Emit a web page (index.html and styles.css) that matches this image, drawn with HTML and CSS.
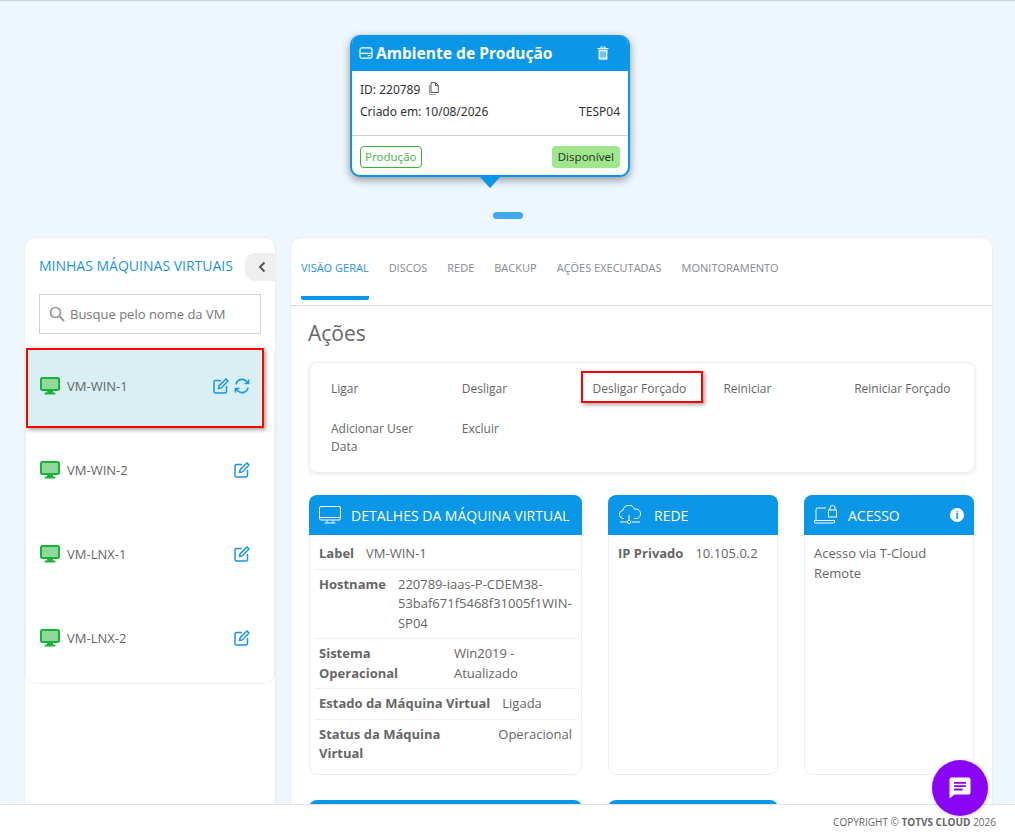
FILE: index.html
```html
<!DOCTYPE html>
<html lang="pt-BR">
<head>
<meta charset="utf-8">
<title>Máquinas Virtuais</title>
<link rel="stylesheet" href="styles.css">
</head>
<body>
<div class="page">
  <section class="top">
    <div class="env">
      <div class="env-card">
        <div class="env-head">
          <svg class="env-icon" viewBox="0 0 16 14" width="14" height="12"><rect x="1" y="1" width="14" height="12" rx="2" fill="none" stroke="#fff" stroke-width="1.4"/><path d="M1 7.500h14" stroke="#fff" stroke-width="1.4"/><path d="M10 10h3" stroke="#fff" stroke-width="1.4"/></svg>
          <span class="env-title">Ambiente de Produção</span>
          <svg class="env-trash" viewBox="0 0 12 14" width="12" height="14"><path d="M.5 2.5h11M4 2.500V1h4v1.500" stroke="#dff0fc" stroke-width="1.200" fill="none"/><path d="M1.500 3.500h9V13a.8.8 0 0 1-.8.8H2.300a.8.8 0 0 1-.8-.8z" fill="#dff0fc"/><path d="M4 5.500v6M6 5.500v6M8 5.500v6" stroke="#0b97e8" stroke-width="1"/></svg>
        </div>
        <div class="env-body">
          <div class="env-row"><span>ID: 220789</span>
            <svg class="copy" viewBox="0 0 12 14" width="12" height="14"><path d="M4 .7h4.500L11.300 3.500V10.500H4z" fill="none" stroke="#555" stroke-width="1"/><path d="M8.500.7v2.800h2.800" fill="none" stroke="#555" stroke-width="1"/><path d="M2.500 3v8.500a1 1 0 0 0 1 1H8.500" fill="none" stroke="#999" stroke-width="1.200"/></svg>
          </div>
          <div class="env-row env-split"><span>Criado em: 10/08/2026</span><span>TESP04</span></div>
        </div>
        <div class="env-foot">
          <span class="tag tag-outline">Produção</span>
          <span class="tag tag-fill">Disponível</span>
        </div>
      </div>
      <div class="env-arrow"></div>
    </div>
    <div class="pill"></div>
  </section>

  <div class="columns">
    <aside class="side">
      <div class="side-head">
        <h2 class="side-title">MINHAS MÁQUINAS VIRTUAIS</h2>
        <button class="collapse" aria-label="Recolher"><svg viewBox="0 0 8 12" width="8" height="12"><path d="M6.500 1.500 2 6l4.500 4.500" fill="none" stroke="#555" stroke-width="2"/></svg></button>
      </div>
      <label class="search">
        <svg viewBox="0 0 16 16" width="16" height="16"><circle cx="6.500" cy="6.500" r="5" fill="none" stroke="#999" stroke-width="1.700"/><path d="M10.200 10.200 15 15" stroke="#999" stroke-width="1.900"/></svg>
        <span>Busque pelo nome da VM</span>
      </label>
      <ul class="vm-list">
        <li class="vm vm-active">
          <svg class="vm-icon" viewBox="0 0 20 18" width="20" height="18"><rect x="1" y="1" width="18" height="12" rx="1.500" fill="#8fd99a" stroke="#16b336" stroke-width="2"/><rect x="7" y="13" width="6" height="3" fill="#16b336"/><rect x="4.500" y="15.500" width="11" height="2" rx="1" fill="#16b336"/></svg>
          <span class="vm-name">VM-WIN-1</span>
          <svg class="act" viewBox="0 0 16 16" width="16" height="16"><path d="M8 2.500H2.500A1.500 1.500 0 0 0 1 4v9.500A1.500 1.500 0 0 0 2.500 15H12a1.500 1.500 0 0 0 1.500-1.500V8" fill="none" stroke="#1b95e6" stroke-width="1.500"/><path d="M5.500 10.500l.6-2.800L13 1l2 2-6.700 6.900z" fill="none" stroke="#1b95e6" stroke-width="1.500"/></svg>
          <svg class="act sync" viewBox="0 0 16 16" width="16" height="16"><path d="M2 6.500A6 6 0 0 1 12.500 3.500L14.500 5.500M14.500 1.500v4h-4M14 9.500A6 6 0 0 1 3.500 12.500L1.500 10.500M1.500 14.500v-4h4" fill="none" stroke="#1b95e6" stroke-width="1.600"/></svg>
        </li>
        <li class="vm">
          <svg class="vm-icon" viewBox="0 0 20 18" width="20" height="18"><rect x="1" y="1" width="18" height="12" rx="1.500" fill="#8fd99a" stroke="#16b336" stroke-width="2"/><rect x="7" y="13" width="6" height="3" fill="#16b336"/><rect x="4.500" y="15.500" width="11" height="2" rx="1" fill="#16b336"/></svg>
          <span class="vm-name">VM-WIN-2</span>
          <svg class="act" viewBox="0 0 16 16" width="16" height="16"><path d="M8 2.500H2.500A1.500 1.500 0 0 0 1 4v9.500A1.500 1.500 0 0 0 2.500 15H12a1.500 1.500 0 0 0 1.500-1.500V8" fill="none" stroke="#1b95e6" stroke-width="1.500"/><path d="M5.500 10.500l.6-2.800L13 1l2 2-6.700 6.900z" fill="none" stroke="#1b95e6" stroke-width="1.500"/></svg>
        </li>
        <li class="vm">
          <svg class="vm-icon" viewBox="0 0 20 18" width="20" height="18"><rect x="1" y="1" width="18" height="12" rx="1.500" fill="#8fd99a" stroke="#16b336" stroke-width="2"/><rect x="7" y="13" width="6" height="3" fill="#16b336"/><rect x="4.500" y="15.500" width="11" height="2" rx="1" fill="#16b336"/></svg>
          <span class="vm-name">VM-LNX-1</span>
          <svg class="act" viewBox="0 0 16 16" width="16" height="16"><path d="M8 2.500H2.500A1.500 1.500 0 0 0 1 4v9.500A1.500 1.500 0 0 0 2.500 15H12a1.500 1.500 0 0 0 1.500-1.500V8" fill="none" stroke="#1b95e6" stroke-width="1.500"/><path d="M5.500 10.500l.6-2.800L13 1l2 2-6.700 6.900z" fill="none" stroke="#1b95e6" stroke-width="1.500"/></svg>
        </li>
        <li class="vm">
          <svg class="vm-icon" viewBox="0 0 20 18" width="20" height="18"><rect x="1" y="1" width="18" height="12" rx="1.500" fill="#8fd99a" stroke="#16b336" stroke-width="2"/><rect x="7" y="13" width="6" height="3" fill="#16b336"/><rect x="4.500" y="15.500" width="11" height="2" rx="1" fill="#16b336"/></svg>
          <span class="vm-name">VM-LNX-2</span>
          <svg class="act" viewBox="0 0 16 16" width="16" height="16"><path d="M8 2.500H2.500A1.500 1.500 0 0 0 1 4v9.500A1.500 1.500 0 0 0 2.500 15H12a1.500 1.500 0 0 0 1.500-1.500V8" fill="none" stroke="#1b95e6" stroke-width="1.500"/><path d="M5.500 10.500l.6-2.800L13 1l2 2-6.700 6.900z" fill="none" stroke="#1b95e6" stroke-width="1.500"/></svg>
        </li>
      </ul>
    </aside>

    <main class="main">
      <nav class="tabs">
        <a class="tab tab-active">VISÃO GERAL</a>
        <a class="tab">DISCOS</a>
        <a class="tab">REDE</a>
        <a class="tab">BACKUP</a>
        <a class="tab">AÇÕES EXECUTADAS</a>
        <a class="tab">MONITORAMENTO</a>
      </nav>
      <div class="content">
        <h1 class="heading">Ações</h1>
        <div class="actions">
          <span class="action">Ligar</span>
          <span class="action">Desligar</span>
          <span class="action action-marked">Desligar Forçado</span>
          <span class="action">Reiniciar</span>
          <span class="action">Reiniciar Forçado</span>
          <span class="action">Adicionar User Data</span>
          <span class="action">Excluir</span>
        </div>
        <div class="cards">
          <article class="card card-wide">
            <header class="card-head">
              <svg class="card-icon" viewBox="0 0 22 18" width="22" height="18"><rect x=".5" y=".5" width="21" height="13.500" rx="1.500" fill="none" stroke="#fff"/><path d="M.5 11.500h21M8 14.500v2M14 14.500v2M5.500 17h11" stroke="#fff" fill="none"/></svg>
              <span>DETALHES DA MÁQUINA VIRTUAL</span>
            </header>
            <div class="card-body">
              <div class="kv"><b>Label</b><span>VM-WIN-1</span></div>
              <div class="kv"><b>Hostname</b><span>220789-iaas-P-CDEM38-53baf671f5468f31005f1WIN-SP04</span></div>
              <div class="kv kv-half"><b>Sistema Operacional</b><span>Win2019 - Atualizado</span></div>
              <div class="kv"><b>Estado da Máquina Virtual</b><span>Ligada</span></div>
              <div class="kv kv-status"><b>Status da Máquina Virtual</b><span>Operacional</span></div>
            </div>
          </article>
          <article class="card">
            <header class="card-head card-head-rede">
              <svg class="card-icon" viewBox="0 0 24 20" width="24" height="20"><path d="M6 13.500H5A4.200 4.200 0 0 1 5 5.200 6 6 0 0 1 16.500 4.200 4.700 4.700 0 0 1 19 13.500H16" fill="none" stroke="#fff"/><path d="M11 10v6M2 17h6.500M13.500 17H22" stroke="#fff" fill="none"/><circle cx="11" cy="17" r="1.700" fill="none" stroke="#fff"/></svg>
              <span>REDE</span>
            </header>
            <div class="card-body"><div class="kv kv-plain"><b>IP Privado</b><span>10.105.0.2</span></div></div>
          </article>
          <article class="card">
            <header class="card-head">
              <svg class="card-icon" viewBox="0 0 24 20" width="24" height="20"><path d="M12 3H3.500A1.500 1.500 0 0 0 2 4.500V15" fill="none" stroke="#fff"/><path d="M.5 15.500h20v1.500a1 1 0 0 1-1 1H1.500a1 1 0 0 1-1-1z" fill="none" stroke="#fff"/><rect x="14.500" y="5" width="8" height="7" fill="none" stroke="#fff"/><path d="M16 5V3a2.500 2.500 0 0 1 5 0v2" fill="none" stroke="#fff"/></svg>
              <span class="grow">ACESSO</span>
              <span class="info">i</span>
            </header>
            <div class="card-body"><p class="plain">Acesso via T-Cloud Remote</p></div>
          </article>
          <article class="card card-wide"><header class="card-head"></header></article>
          <article class="card"><header class="card-head"></header></article>
        </div>
      </div>
    </main>
  </div>

  <footer class="footer">COPYRIGHT © <b>TOTVS CLOUD</b> 2026</footer>
  <button class="chat" aria-label="Chat"><svg viewBox="0 0 24 24" width="24" height="24"><path d="M3.500 1.500h17a2 2 0 0 1 2 2v13a2 2 0 0 1-2 2H6.500L1.500 22.500V3.500a2 2 0 0 1 2-2z" fill="#fff"/><path d="M6 6h12v1.800H6zM6 9.300h12v1.800H6zM6 12.600h8.500v1.800H6z" fill="#8a05f5"/></svg></button>
</div>
</body>
</html>
```
FILE: styles.css
```css
* { box-sizing: border-box; }
html, body { margin: 0; padding: 0; }
body { font-family: "Open Sans", "Liberation Sans", sans-serif; color: #666; background: #eef6fe; }
.page { position: relative; width: 1015px; height: 839px; overflow: hidden; background: #eef6fe; border-top: 1px solid #c9d0d8; }

.top { height: 237px; display: flex; flex-direction: column; align-items: center; padding-top: 34px; }
.env { width: 280px; margin-right: 35px; display: flex; flex-direction: column; align-items: center; }
.env-card { width: 280px; height: 142px; background: #fff; border: 2px solid #0b97e8; border-top: 0; border-radius: 10px; box-shadow: 0 3px 8px rgba(0,0,0,.4); overflow: hidden; font-family: "Noto Sans", sans-serif; color: #333; }
.env-head { height: 36px; margin: 0 -2px; background: #0b97e8; color: #fff; display: flex; align-items: center; padding: 0 21px 0 9px; }
.env-icon { flex: none; margin-right: 3px; }
.env-title { flex: 1; font-size: 15.600px; font-weight: 700; white-space: nowrap; }
.env-body { height: 65px; border-bottom: 1px solid #cdd3d9; padding: 7px 8px 0; font-size: 12px; }
.env-row { display: flex; align-items: center; height: 22px; }
.env-split { justify-content: space-between; }
.copy { margin-left: 7px; }
.env-foot { display: flex; justify-content: space-between; padding: 10px 8px 0; }
.tag { height: 22px; line-height: 20px; border-radius: 4px; font-size: 11.500px; padding: 0 4px; border: 1px solid transparent; }
.tag-outline { color: #51b556; border-color: #3aac40; }
.tag-fill { background: #a0e68e; color: #2a3a28; padding: 0 5px; }
.env-arrow { width: 0; height: 0; border-left: 10px solid transparent; border-right: 10px solid transparent; border-top: 11px solid #0b97e8; }
.pill { width: 30px; height: 7px; border-radius: 4px; background: #3fa9ee; margin: 24px 0 0 1px; }

.columns { display: flex; gap: 16px; padding: 0 23px 0 25px; align-items: stretch; height: 620px; }
.side { width: 250px; flex: none; background: #fff; border-radius: 10px 10px 0 0; padding-top: 19px; box-shadow: 0 0 3px rgba(0,0,0,.08); }
.side-head { display: flex; align-items: center; justify-content: space-between; padding-left: 14px; height: 20px; }
.side-title { margin: 0 0 2px; font-size: 14px; font-weight: 400; color: #1c94e4; white-space: nowrap; line-height: 20px; }
.collapse { width: 30px; height: 28px; border: 0; padding: 0 0 0 3px; background: #efefef; border-radius: 10px 0 0 10px; display: flex; align-items: center; justify-content: center; }
.search { display: flex; align-items: center; gap: 5px; margin: 17px 14px 0; height: 40px; border: 1px solid #ced4da; padding: 0 9px; font-size: 13px; color: #777; background: #fff; }
.vm-list { list-style: none; margin: 12px 0 0; padding: 0; height: 338px; border-radius: 10px; border: 1px solid #eef0f2; border-top-color: #f2f3f4; overflow: visible; }
.vm { height: 84px; display: flex; align-items: center; padding: 0 24px 0 14px; font-size: 13px; color: #666; }
.vm-active { height: 80px; margin: 1px 10px 0 0; padding: 0 12px 5px 12px; background: #d8eff4; border: 2px solid #f00; box-shadow: 2px 2px 4px rgba(0,0,0,.35); }
.vm-icon { flex: none; margin-right: 7px; }
.vm-name { flex: 1; }
.act { flex: none; }
.sync { margin-left: 5px; }

.main { width: 701px; flex: none; background: #fff; border-radius: 10px 10px 0 0; box-shadow: 0 0 3px rgba(0,0,0,.08); }
.tabs { height: 68px; display: flex; gap: 20px; padding: 0 10px; border-bottom: 1px solid #d5d8dc; }
.tab { height: 62px; padding-top: 22px; font-size: 11px; line-height: 16px; color: #858a8f; white-space: nowrap; }
.tab-active { color: #1c94e4; border-bottom: 4px solid #0b97e8; border-radius: 0 0 2px 2px; }
.content { padding: 12px 17px 0; }
.heading { margin: 0; font-size: 21px; font-weight: 400; color: #666; line-height: 30px; }
.actions { margin: 14px 0 0 1px; height: 111px; border: 1px solid #eceef0; border-radius: 8px; box-shadow: 0 1px 4px rgba(0,0,0,.1); padding: 8px 0 0 11px; display: grid; grid-template-columns: repeat(5, 130.800px); align-content: start; font-size: 12px; line-height: 18px; }
.action { padding: 9px 22px 11px 10px; }
.action:nth-child(n+6) { padding-top: 11px; padding-right: 30px; }
.action-marked { position: relative; white-space: nowrap; }
.action-marked::after { content: ""; box-sizing: border-box; position: absolute; left: -2px; top: 0; width: 122px; height: 32px; border: 2px solid #f00; box-shadow: 2px 2px 4px rgba(0,0,0,.35); }
.cards { margin: 22px 0 0 1px; display: grid; grid-template-columns: 273px 170px 170px; column-gap: 26px; grid-template-rows: 280px 40px; row-gap: 25px; }
.card { display: flex; flex-direction: column; border-radius: 8px; overflow: hidden; background: #fff; font-size: 13px; }
.card-head { flex: none; height: 40px; background: #0b97e8; color: #fff; display: flex; align-items: center; gap: 10px; padding: 0 10px; font-size: 14px; white-space: nowrap; }
.card-head-rede { gap: 12px; }
.card-icon { flex: none; }
.grow { flex: 1; }
.info { width: 14px; height: 14px; border-radius: 50%; background: #fff; color: #0b97e8; font-size: 10px; font-weight: 700; line-height: 14px; text-align: center; }
.card-body { flex: 1; padding: 4px 4px 0; line-height: 19.500px; border: 1px solid #eceef0; border-top: 0; border-radius: 0 0 8px 8px; }
.kv { display: flex; justify-content: flex-start; gap: 12px; padding: 5px; border-bottom: 1px solid #edeff1; }
.kv:last-child { border-bottom: 0; }
.kv b { font-weight: 700; flex: none; color: #666; }
.kv-half b { width: 123px; }
.kv-status { justify-content: space-between; }
.kv-status b { width: 130px; }
.kv-plain { border: 0; }
.plain { margin: 0; padding: 5px; }

.footer { position: absolute; left: 0; right: 0; bottom: 0; height: 35px; background: #fff; border-top: 1px solid #dfe3e8; font-size: 10px; line-height: 34px; text-align: right; padding-right: 19px; color: #666; }
.chat { position: absolute; left: 932px; top: 759px; width: 56px; height: 56px; border: 0; padding: 0; border-radius: 50%; background: #8a05f5; display: flex; align-items: center; justify-content: center; box-shadow: 0 1px 4px rgba(0,0,0,.2); }
```
